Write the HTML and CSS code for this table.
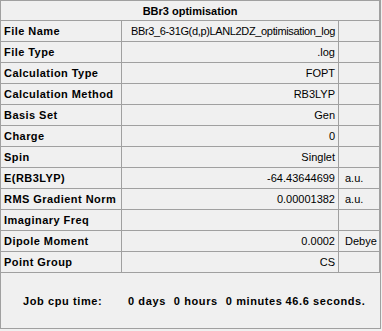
FILE: index.html
```html
<!DOCTYPE html>
<html lang="en">
<head>
    <meta charset="UTF-8">
    <title>BBr3 optimisation</title>
    <link rel="stylesheet" href="styles.css">
</head>
<body>
    <div class="panel">
        <table class="summary">
            <colgroup>
                <col class="col-key">
                <col class="col-val">
                <col class="col-unit">
            </colgroup>
            <tr>
                <td class="title" colspan="3">BBr3 optimisation</td>
            </tr>
            <tr><td class="key">File Name</td><td class="val tight">BBr3_6-31G(d,p)LANL2DZ_optimisation_log</td><td class="unit"></td></tr>
            <tr><td class="key">File Type</td><td class="val">.log</td><td class="unit"></td></tr>
            <tr><td class="key">Calculation Type</td><td class="val">FOPT</td><td class="unit"></td></tr>
            <tr><td class="key">Calculation Method</td><td class="val">RB3LYP</td><td class="unit"></td></tr>
            <tr><td class="key">Basis Set</td><td class="val">Gen</td><td class="unit"></td></tr>
            <tr><td class="key">Charge</td><td class="val">0</td><td class="unit"></td></tr>
            <tr><td class="key">Spin</td><td class="val">Singlet</td><td class="unit"></td></tr>
            <tr><td class="key">E(RB3LYP)</td><td class="val">-64.43644699</td><td class="unit">a.u.</td></tr>
            <tr><td class="key">RMS Gradient Norm</td><td class="val">0.00001382</td><td class="unit">a.u.</td></tr>
            <tr><td class="key">Imaginary Freq</td><td class="val"></td><td class="unit"></td></tr>
            <tr><td class="key">Dipole Moment</td><td class="val">0.0002</td><td class="unit">Debye</td></tr>
            <tr><td class="key">Point Group</td><td class="val">CS</td><td class="unit"></td></tr>
        </table>
        <div class="cpu">
            <span class="cpu-label">Job cpu time:</span>
            <span>0 days</span>
            <span class="wide">0 hours</span>
            <span class="wide">0 minutes</span>
            <span class="narrow">46.6 seconds.</span>
        </div>
    </div>
</body>
</html>
```

FILE: styles.css
```css
body {
    margin: 0;
    background-color: #f0f0f0;
    font-family: "Liberation Sans", Arial, sans-serif;
    font-size: 11px;
    color: #000;
}

.panel {
    width: 380px;
    border-right: 1px solid #a0a0a0;
    border-bottom: 1px solid #a0a0a0;
}

.summary {
    border-collapse: separate;
    border-spacing: 0;
    border-top: 1px solid #a0a0a0;
    border-left: 1px solid #a0a0a0;
    width: 380px;
    table-layout: fixed;
}

.col-key {
    width: 121px;
}

.col-val {
    width: 217px;
}

.col-unit {
    width: 41px;
}

.summary td {
    height: 20px;
    padding: 0;
    border-right: 1px solid #a0a0a0;
    border-bottom: 1px solid #a0a0a0;
    white-space: nowrap;
    overflow: hidden;
}

.summary td.title {
    height: 19px;
    text-align: center;
    font-weight: bold;
}

.summary td.key {
    padding-left: 3px;
    font-weight: bold;
    letter-spacing: 0.45px;
}

.summary td.val {
    padding-right: 3px;
    text-align: right;
}

/* long file names get squeezed a little so they fit the column */
.summary td.tight {
    letter-spacing: -0.35px;
}

.summary td.unit {
    padding-left: 6px;
}

.cpu {
    display: flex;
    align-items: center;
    height: 55px;
    padding-left: 22px;
    border-left: 1px solid #a0a0a0;
    font-weight: bold;
    letter-spacing: 0.6px;
    white-space: pre;
}

.cpu-label {
    width: 105px;
}

.cpu .wide {
    margin-left: 8px;
}

.cpu .narrow {
    margin-left: 3px;
}
```
